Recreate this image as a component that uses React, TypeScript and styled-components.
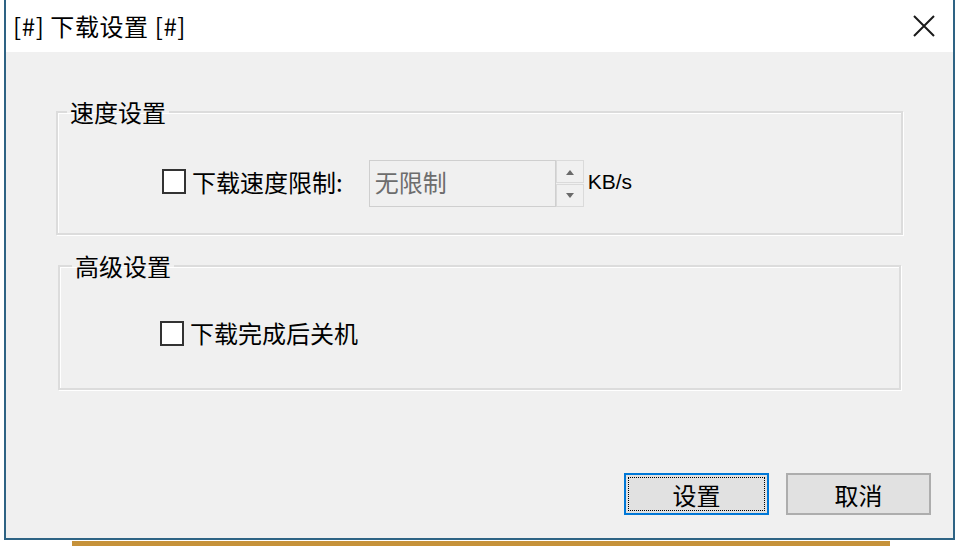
import React from 'react';
import styled, { createGlobalStyle } from 'styled-components';

const GlobalStyle = createGlobalStyle`
  html, body {
    margin: 0;
    padding: 0;
    background: #ffffff;
    overflow: hidden;
  }
  body {
    font-family: "Noto Sans CJK SC", "Liberation Sans", sans-serif;
  }
`;

const Desktop = styled.div`
  width: 960px;
  height: 546px;
  display: flex;
  flex-direction: column;
`;

const Window = styled.div`
  box-sizing: border-box;
  margin-left: 4px;
  width: 951px;
  height: 540px;
  border: 2px solid #2e6384;
  border-top: none;
  background: #f0f0f0;
  display: flex;
  flex-direction: column;
`;

const BehindStrip = styled.div`
  margin: 1px 0 0 72px;
  width: 818px;
  height: 5px;
  background: #c6923a;
`;

const TitleBar = styled.div`
  height: 52px;
  background: #ffffff;
  display: flex;
  align-items: center;
  justify-content: space-between;
  padding: 0 18px 0 7px;
`;

const Title = styled.span`
  font-size: 24px;
  letter-spacing: 0.6px;
  color: #000;
  line-height: 1;
`;

const CloseButton = styled.span`
  display: flex;
  width: 22px;
  height: 22px;
`;

const Body = styled.div`
  flex: 1;
  display: flex;
  flex-direction: column;
  padding: 48px 50px 23px;
`;

const Group = styled.fieldset<{ $inset: number; $top: number; $bottom: number }>`
  margin: 0 ${(p) => p.$inset}px;
  padding: ${(p) => p.$top}px 0 ${(p) => p.$bottom}px 0;
  border: 2px solid #dcdcdc;
  box-shadow: 1px 1px 0 #ffffff, inset 1px 1px 0 #ffffff;
  min-width: 0;
`;

const Legend = styled.legend<{ $shift: number }>`
  margin-left: ${(p) => p.$shift}px;
  padding: 0 3px;
  font-size: 24px;
  line-height: 24px;
  color: #000;
`;

const GroupGap = styled.div`
  height: 19px;
`;

const Row = styled.div<{ $indent: number }>`
  display: flex;
  align-items: center;
  padding-left: ${(p) => p.$indent}px;
`;

const CheckBox = styled.span<{ $lift?: number }>`
  box-sizing: border-box;
  width: 24px;
  height: 25px;
  border: 2px solid #333333;
  background: #ffffff;
  flex-shrink: 0;
  margin-bottom: ${(p) => p.$lift ?? 0}px;
`;

const Label = styled.span<{ $lift?: number }>`
  margin-left: 6px;
  margin-bottom: ${(p) => p.$lift ?? 0}px;
  font-size: 24px;
  line-height: 26px;
  color: #000;
`;

const Spin = styled.div`
  margin-left: 26px;
  display: flex;
  height: 47px;
`;

const SpinInput = styled.div`
  box-sizing: border-box;
  width: 187px;
  height: 47px;
  border: 1px solid #cfcfcf;
  background: #f0f0f0;
  color: #6d6d6d;
  font-size: 24px;
  display: flex;
  align-items: center;
  padding: 0 0 4px 5px;
`;

const SpinButtons = styled.div`
  display: flex;
  flex-direction: column;
  width: 28px;
  gap: 1px;
`;

const SpinHalf = styled.div`
  box-sizing: border-box;
  flex: 1;
  border: 1px solid #dadada;
  background: #f0f0f0;
  display: flex;
  align-items: center;
  justify-content: center;
`;

const Unit = styled.span`
  margin-left: 4px;
  margin-bottom: 4px;
  font-family: "Liberation Sans", Arial, sans-serif;
  font-size: 21px;
  color: #000;
`;

const ButtonBar = styled.div`
  margin-top: auto;
  margin-right: -28px;
  display: flex;
  justify-content: flex-end;
  gap: 17px;
`;

const DialogButton = styled.button<{ $focused?: boolean }>`
  box-sizing: border-box;
  width: 145px;
  height: 42px;
  font-family: "Noto Sans CJK SC", sans-serif;
  font-size: 24px;
  color: #000;
  background: #e1e1e1;
  border: 2px solid ${(p) => (p.$focused ? '#0078d7' : '#adadad')};
  outline: ${(p) => (p.$focused ? '1px dotted #000' : 'none')};
  outline-offset: -5px;
  padding: 0;
  display: flex;
  align-items: center;
  justify-content: center;
`;

const Arrow = ({ up }: { up?: boolean }) => (
  <svg width="10" height="6" viewBox="0 0 10 6">
    <path d={up ? 'M1 6 L5 1 L9 6 Z' : 'M1 0 L5 5 L9 0 Z'} fill="#6a6a6a" />
  </svg>
);

export default function App() {
  return (
    <Desktop>
      <GlobalStyle />
      <Window>
        <TitleBar>
          <Title>[#] 下载设置 [#]</Title>
          <CloseButton>
            <svg width="22" height="22" viewBox="0 0 22 22">
              <path d="M1 1 L21 21 M21 1 L1 21" stroke="#1a1a1a" strokeWidth="2" />
            </svg>
          </CloseButton>
        </TitleBar>
        <Body>
          <Group $inset={0} $top={36} $bottom={26}>
            <Legend $shift={9}>速度设置</Legend>
            <Row $indent={104}>
              <CheckBox $lift={4} />
              <Label $lift={4}>下载速度限制:</Label>
              <Spin>
                <SpinInput>无限制</SpinInput>
                <SpinButtons>
                  <SpinHalf>
                    <Arrow up />
                  </SpinHalf>
                  <SpinHalf>
                    <Arrow />
                  </SpinHalf>
                </SpinButtons>
              </Spin>
              <Unit>KB/s</Unit>
            </Row>
          </Group>
          <GroupGap />
          <Group $inset={2} $top={42} $bottom={42}>
            <Legend $shift={12}>高级设置</Legend>
            <Row $indent={100}>
              <CheckBox />
              <Label>下载完成后关机</Label>
            </Row>
          </Group>
          <ButtonBar>
            <DialogButton $focused>设置</DialogButton>
            <DialogButton>取消</DialogButton>
          </ButtonBar>
        </Body>
      </Window>
      <BehindStrip />
    </Desktop>
  );
}
